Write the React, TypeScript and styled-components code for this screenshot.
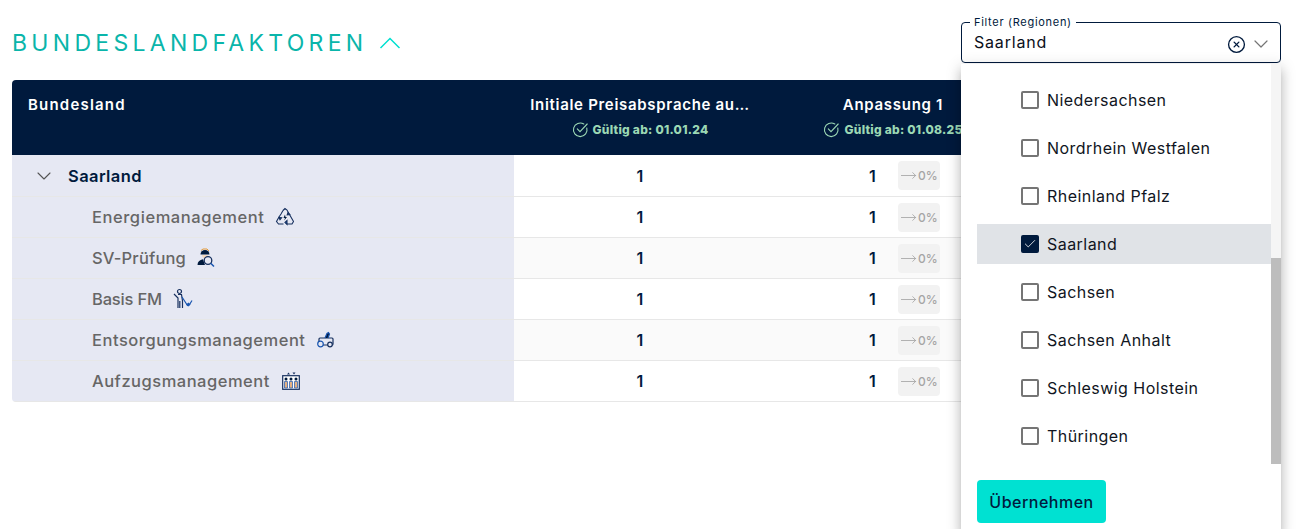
import React from 'react';
import styled, { createGlobalStyle } from 'styled-components';
import { ChevronDown, CircleX, Check, MoveRight } from 'lucide-react';

const GlobalStyle = createGlobalStyle`
  html, body {
    margin: 0;
    padding: 0;
    background: #fff;
    font-family: Inter, "Noto Sans", sans-serif;
  }
`;

const Page = styled.div`
  width: 1304px;
  height: 529px;
  padding: 0 23px 0 12px;
  box-sizing: border-box;
  overflow: hidden;
`;

const Header = styled.header`
  height: 80px;
  padding-top: 18px;
  box-sizing: border-box;
  display: flex;
  justify-content: space-between;
  align-items: flex-start;
`;

const TitleBlock = styled.div`
  height: 41px;
  margin-top: 4px;
  display: flex;
  align-items: center;
  gap: 12px;
`;

const Title = styled.h1`
  margin: 0;
  font-size: 23px;
  font-weight: 400;
  letter-spacing: 4.3px;
  color: #0ab5aa;
`;

const FilterBox = styled.div`
  position: relative;
  width: 320px;
`;

const Field = styled.fieldset`
  height: 45px;
  margin: 0;
  padding: 0 7px 0 12px;
  box-sizing: border-box;
  border: 1px solid #001a3d;
  border-radius: 4px;
  display: flex;
  align-items: center;
`;

const FieldLabel = styled.legend`
  padding: 0 4px;
  margin-left: -4px;
  font-size: 11px;
  line-height: 8px;
  color: #001a3d;
  letter-spacing: 0.7px;
`;

const FieldValue = styled.span`
  flex: 1;
  font-size: 16px;
  margin-top: -4px;
  letter-spacing: 0.8px;
  color: #0b0f1a;
`;

const FieldIcons = styled.span`
  display: flex;
  align-items: center;
  gap: 3px;
`;

const Panel = styled.div`
  position: absolute;
  top: 46px;
  left: 0;
  width: 320px;
  height: 470px;
  background: #fff;
  box-shadow: 0 5px 5px -3px rgba(0, 0, 0, 0.2), 0 8px 10px 1px rgba(0, 0, 0, 0.14), 0 3px 14px 2px rgba(0, 0, 0, 0.12);
  z-index: 2;
`;

const ListArea = styled.div`
  height: 400px;
  display: flex;
  overflow: hidden;
`;

const List = styled.ul`
  flex: 1;
  list-style: none;
  margin: 0;
  padding: 16px 0 0 16px;
  display: flex;
  flex-direction: column;
  gap: 8px;
`;

const Option = styled.li<{ $selected?: boolean }>`
  height: 40px;
  flex: none;
  padding-left: 44px;
  display: flex;
  align-items: center;
  gap: 8px;
  font-size: 16px;
  letter-spacing: 0.45px;
  color: #101522;
  background: ${(p) => (p.$selected ? '#e0e3e7' : 'transparent')};
`;

const Box = styled.span<{ $checked?: boolean }>`
  width: 18px;
  height: 18px;
  box-sizing: border-box;
  border-radius: 2px;
  border: 2px solid ${(p) => (p.$checked ? '#001a3d' : '#757575')};
  background: ${(p) => (p.$checked ? '#001a3d' : '#fff')};
  color: #fff;
  display: flex;
  align-items: center;
  justify-content: center;
`;

const Track = styled.div`
  width: 10px;
  background: #f5f5f5;
  padding-top: 194px;
  box-sizing: border-box;
`;

const Thumb = styled.div`
  height: 206px;
  background: #bdbdbd;
`;

const ApplyButton = styled.button`
  display: block;
  margin: 16px 0 0 16px;
  width: 129px;
  height: 43px;
  padding: 0;
  border: none;
  border-radius: 4px;
  background: #00e1d2;
  color: #001a3d;
  font-family: inherit;
  font-size: 16px;
  font-weight: 500;
  letter-spacing: 0.5px;
`;

const Table = styled.div`
  border-radius: 4px;
  overflow: hidden;
`;

const HeadRow = styled.div`
  height: 75px;
  background: #001a3d;
  color: #fff;
  display: grid;
  grid-template-columns: 502px 252px 254px 1fr;
`;

const HeadFirst = styled.div`
  padding: 16px 0 0 16px;
  font-size: 15px;
  line-height: 18px;
  font-weight: 600;
  letter-spacing: 1.2px;
`;

const HeadCell = styled.div`
  padding-top: 16px;
  display: flex;
  flex-direction: column;
  align-items: center;
`;

const HeadName = styled.div`
  font-size: 15px;
  line-height: 18px;
  font-weight: 600;
  letter-spacing: 0.7px;
  white-space: nowrap;
`;

const Valid = styled.div`
  margin-top: 7px;
  display: flex;
  align-items: center;
  gap: 4px;
  font-size: 12px;
  font-weight: 800;
  line-height: 16px;
  letter-spacing: 0.25px;
  white-space: nowrap;
  color: #9bd8b4;
`;

const Row = styled.div<{ $shade?: boolean; $group?: boolean }>`
  height: ${(p) => (p.$group ? '42px' : '41px')};
  box-sizing: border-box;
  display: grid;
  grid-template-columns: 502px 252px 254px 1fr;
  background: ${(p) => (p.$shade ? '#fafafa' : '#fff')};
  border-bottom: 1px solid #e7e7e7;
`;

const NameCell = styled.div<{ $group?: boolean }>`
  display: flex;
  align-items: center;
  gap: ${(p) => (p.$group ? '12px' : '11px')};
  padding-left: ${(p) => (p.$group ? '20px' : '80px')};
  background: #e6e8f3;
  font-size: 16.5px;
  font-weight: ${(p) => (p.$group ? 600 : 500)};
  letter-spacing: 0.4px;
  color: ${(p) => (p.$group ? '#001a3d' : '#666')};
`;

const ServiceName = styled.span<{ $tracking: number }>`
  letter-spacing: ${(p) => p.$tracking}px;
`;

const Value = styled.div`
  display: flex;
  align-items: center;
  justify-content: center;
  font-size: 16px;
  font-weight: 600;
  color: #001a3d;
`;

const PlanValue = styled(Value)`
  justify-content: flex-start;
  padding-left: 103px;
  gap: 22px;
`;

const Change = styled.span`
  width: 42px;
  height: 29px;
  border-radius: 4px;
  background: #f2f2f2;
  color: #a5a5a5;
  font-size: 12px;
  font-weight: 500;
  display: flex;
  align-items: center;
  justify-content: center;
  gap: 1px;
`;

const TitleChevron = () => (
  <svg width="22" height="13" viewBox="0 0 22 13" fill="none" stroke="#00e0d0" strokeWidth="1.5">
    <path d="M1.500 12 11 2.500l9.500 9.500" />
  </svg>
);

const RecycleIcon = () => (
  <svg width="20" height="20" viewBox="0 0 20 20" fill="none" stroke="#17305f" strokeWidth="1.1">
    <path d="M8 3.5 10 1.5l2 1.5 2.5 4.5M14.5 7.5l4 7-1.5 2.5h-5M8.5 17H3.5L1.5 14.5 4 10l2-3 2-3.5" />
    <path d="M13 5.5l1.8 2-2.6.4zM10 15.5l2-2v4zM4 10.5l2.6.3-1.6 2z" fill="#1a56b0" />
    <path d="M10 7.5 8.5 11H10l-.8 2.5L12 10h-1.5z" fill="#001a3d" stroke="none" />
  </svg>
);

const InspectorIcon = () => (
  <svg width="18" height="20" viewBox="0 0 18 20" fill="none">
    <path d="M3.500 6.500a4.500 4.500 0 0 1 9 0z" fill="#001a3d" />
    <path d="M4 2.500 6 1h4l2 2" stroke="#e39a3b" strokeWidth="1" />
    <path d="M5 7h6c0 2-1.200 3.200-3 3.200S5 9 5 7z" fill="#f3d9bf" />
    <path d="M0.500 17c0-3 2-5.200 5.500-5.700L8 17z" fill="#001a3d" />
    <circle cx="11" cy="12.500" r="3.800" fill="#e6e8f3" stroke="#17305f" strokeWidth="1.300" />
    <path d="M13.700 15.200 17 18.500" stroke="#1a56b0" strokeWidth="1.500" />
  </svg>
);

const CleanerIcon = () => (
  <svg width="20" height="22" viewBox="0 0 20 22" fill="none" stroke="#17305f" strokeWidth="1.200">
    <circle cx="6.500" cy="3.500" r="2" fill="#e6e8f3" />
    <path d="M1 6 5 10V20M5 6.500h3.500l1 6.500v7M6.800 13v7" />
    <path d="M9 9l5.500 8.500 2-1 2.500-4" stroke="#1a56b0" />
    <path d="M13 16.500l2.500 2 2-2-2-2z" fill="#1a56b0" stroke="none" />
  </svg>
);

const DisposalIcon = () => (
  <svg width="17" height="20" viewBox="0 0 17 20" fill="none" stroke="#17305f" strokeWidth="1.200">
    <rect x="2" y="8" width="14" height="7" rx="1" fill="#e6e8f3" />
    <circle cx="3.500" cy="14" r="2.800" fill="#e6e8f3" stroke="#1a56b0" />
    <circle cx="13" cy="14.500" r="2.300" fill="#e6e8f3" />
    <path d="M8 8 10 3.500l1.500-1 1 1.500L11 8" stroke="#1a56b0" fill="#001a3d" />
  </svg>
);

const ElevatorIcon = () => (
  <svg width="20" height="20" viewBox="0 0 20 20" fill="none">
    <path d="M6 3.500 7.500 1.500 9 3.500zM11.500 1.500h3L13 3.500z" fill="#17305f" />
    <rect x="1.700" y="4.700" width="16.600" height="13.600" fill="#fff" stroke="#17305f" strokeWidth="1.200" />
    {[5, 10, 15].map((x) => (
      <g key={x}>
        <circle cx={x} cy="8" r="1.500" fill="#001a3d" />
        <path d={`M${x - 1.500} 10.500h3V17h-3z`} fill="#e5b183" stroke="#1a56b0" strokeWidth="0.700" />
      </g>
    ))}
  </svg>
);

const ValidCheck = () => (
  <svg width="17" height="17" viewBox="0 0 17 17" fill="none" stroke="#9bd8b4" strokeWidth="1.100">
    <path d="M14.800 7a6.800 6.800 0 1 1-3-4" strokeLinecap="round" />
    <path d="M5.300 7.800 8 10.600 15.200 3" strokeLinecap="round" />
  </svg>
);

const services = [
  { name: 'Energiemanagement', tracking: 0.56, icon: <RecycleIcon /> },
  { name: 'SV-Prüfung', tracking: 0.16, icon: <InspectorIcon /> },
  { name: 'Basis FM', tracking: -0.19, icon: <CleanerIcon /> },
  { name: 'Entsorgungsmanagement', tracking: 0.52, icon: <DisposalIcon /> },
  { name: 'Aufzugsmanagement', tracking: 0.5, icon: <ElevatorIcon /> },
];

const regions = [
  'Niedersachsen',
  'Nordrhein Westfalen',
  'Rheinland Pfalz',
  'Saarland',
  'Sachsen',
  'Sachsen Anhalt',
  'Schleswig Holstein',
  'Thüringen',
];

const Values = () => (
  <>
    <Value>1</Value>
    <PlanValue>
      1
      <Change>
        <MoveRight size={17} strokeWidth={1.2} />
        0%
      </Change>
    </PlanValue>
    <div />
  </>
);

export default function App() {
  return (
    <Page>
      <GlobalStyle />
      <Header>
        <TitleBlock>
          <Title>BUNDESLANDFAKTOREN</Title>
          <TitleChevron />
        </TitleBlock>
        <FilterBox>
          <Field>
            <FieldLabel>Filter (Regionen)</FieldLabel>
            <FieldValue>Saarland</FieldValue>
            <FieldIcons>
              <CircleX size={19} color="#001a3d" strokeWidth={1.7} />
              <ChevronDown size={24} color="#757575" strokeWidth={1.2} />
            </FieldIcons>
          </Field>
          <Panel>
            <ListArea>
              <List>
                {regions.map((region) => (
                  <Option key={region} $selected={region === 'Saarland'}>
                    <Box $checked={region === 'Saarland'}>
                      {region === 'Saarland' && <Check size={16} strokeWidth={1.4} />}
                    </Box>
                    {region}
                  </Option>
                ))}
              </List>
              <Track>
                <Thumb />
              </Track>
            </ListArea>
            <ApplyButton>Übernehmen</ApplyButton>
          </Panel>
        </FilterBox>
      </Header>
      <Table>
        <HeadRow>
          <HeadFirst>Bundesland</HeadFirst>
          <HeadCell>
            <HeadName>Initiale Preisabsprache au…</HeadName>
            <Valid>
              <ValidCheck />
              Gültig ab: 01.01.24
            </Valid>
          </HeadCell>
          <HeadCell>
            <HeadName>Anpassung 1</HeadName>
            <Valid>
              <ValidCheck />
              Gültig ab: 01.08.25
            </Valid>
          </HeadCell>
          <div />
        </HeadRow>
        <Row $group>
          <NameCell $group>
            <ChevronDown size={24} color="#555" strokeWidth={1.1} />
            <span>Saarland</span>
          </NameCell>
          <Values />
        </Row>
        {services.map((service, i) => (
          <Row key={service.name} $shade={i % 2 === 1}>
            <NameCell>
              <ServiceName $tracking={service.tracking}>{service.name}</ServiceName>
              {service.icon}
            </NameCell>
            <Values />
          </Row>
        ))}
      </Table>
    </Page>
  );
}
